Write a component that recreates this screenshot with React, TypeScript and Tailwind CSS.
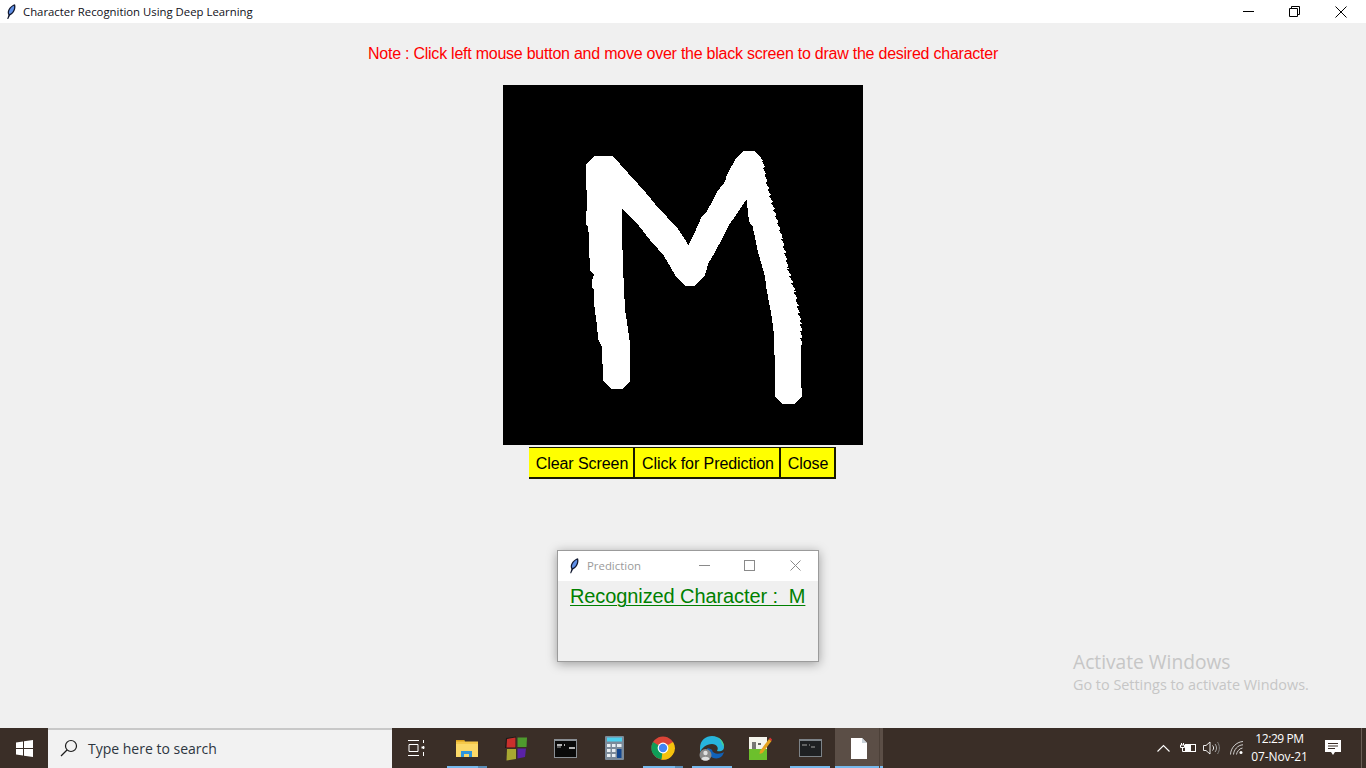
import React from "react";

const FONT = { fontFamily: '"Liberation Sans", Arial, sans-serif' };
const SEGOE = { fontFamily: '"Open Sans", "Noto Sans", sans-serif' };

function Feather({ size = 13 }: { size?: number }) {
  return (
    <svg width={size} height={size * 1.55} viewBox="0 0 10 15.5">
      <path d="M1.2 15 L2.4 11 C0.4 8 3 2 9 0.3 C10.5 4 8 10 4 11.4 L2 15.5 Z" fill="#10172e" />
      <path d="M3 9.6 C2.5 6.5 5 3 8 1.8 C8.6 4.5 7 8.6 3.8 10 Z" fill="#5f8fe6" />
    </svg>
  );
}

const toCanvas = (p: string): [number, number] => {
  const [x, y] = p.split(",").map(Number);
  return [x / 3 + 67, y / 3 + 55];
};

const HEAD =
  "48,75 75,47 128,47 175,100 225,155 262,200 320,262 345,298 355,315 375,275 395,230 410,215 445,150 465,125 470,105 495,60 520,33 555,33 578,60";
const RIGHT_EDGE = "578,60 590,125 600,165 617,225 637,295 655,385 675,455 693,550 695,620";
const TAIL =
  "695,770 672,792 638,792 615,770 613,590 605,530 590,450 585,410 575,375 565,340 548,260 537,245 530,180 525,185 495,230 480,250 460,290 430,345 415,370 405,405 375,437 345,437 315,405 295,370 280,345 240,300 205,255 157,208 157,310 160,400 165,510 173,560 180,610 180,725 158,747 125,747 100,722 95,620 85,600 80,550 72,490 72,450 67,445 67,420 72,405 60,390 55,260 48,255 52,150 48,150";

function serrated(): [number, number][] {
  const anchors = RIGHT_EDGE.split(" ").map(toCanvas);
  const out: [number, number][] = [];
  for (let i = 0; i < anchors.length - 1; i++) {
    const [x0, y0] = anchors[i];
    const [x1, y1] = anchors[i + 1];
    for (let y = y0; y < y1; y += 7) {
      const x = x0 + ((x1 - x0) * (y - y0)) / (y1 - y0);
      out.push([x + 1, y], [x - 1, y + 1]);
    }
  }
  return out;
}

const points = [
  ...HEAD.split(" ").map(toCanvas),
  ...serrated(),
  ...TAIL.split(" ").map(toCanvas),
]
  .map(([x, y]) => `${x.toFixed(1)},${y.toFixed(1)}`)
  .join(" ");

function Taskbar() {
  return (
    <div className="flex h-10 shrink-0 items-stretch bg-[#3a2e27] text-white">
      <div className="flex w-12 items-center justify-center">
        <svg width="17" height="17" viewBox="0 0 17 17" fill="#fff">
          <path d="M0 2.4 7 1.4V8H0ZM8 1.3 17 0V8H8ZM0 9H7V15.6L0 14.6ZM8 9H17V17L8 15.7Z" />
        </svg>
      </div>
      <div className="flex w-[344px] items-center border-t-2 border-[#c8c8c8] bg-[#f2f2f2] pb-[2px] pl-[12px] text-[#2d3640]">
        <svg width="18" height="18" viewBox="0 0 18 18" fill="none" stroke="#1c1c1c" strokeWidth="1.2">
          <circle cx="11" cy="7" r="5.5" />
          <path d="M7 11 1 17" />
        </svg>
        <span className="ml-[10px] text-[14px]" style={SEGOE}>Type here to search</span>
      </div>
      <div className="flex w-12 items-center justify-center">
        <svg width="17" height="16" viewBox="0 0 17 16" fill="none" stroke="#fff" strokeWidth="1">
          <path d="M0 .5H11M0 15.5H11M1 4.5H10V11.5H1ZM15.5 0V3M15.5 6V9M15.5 12V16" />
          <path d="M13.5 6.5h3v2h-3z" fill="#fff" stroke="none" />
        </svg>
      </div>
      <div className="relative ml-[3px] flex w-12 items-center justify-center">
        <svg width="24" height="20" viewBox="0 0 24 20">
          <path d="M1 2H9L10 3.5H23V19H1Z" fill="#f5c94a" />
          <path d="M1 2H9L10 3.5H1Z" fill="#dba21c" />
          <path d="M1 6H23V19H1Z" fill="#fbd968" />
          <path d="M6 19V13H17V19H14V16H9V19Z" fill="#2f96dc" />
        </svg>
        <div className="absolute bottom-0 left-[4px] h-0.5 w-[31px] bg-[#76b9ed]" />
        <div className="absolute bottom-0 left-[35px] h-0.5 w-[9px] bg-[#5a8eb8]" />
      </div>
      <div className="flex w-[50px] items-center justify-center">
        <svg width="23" height="25" viewBox="0 0 23 25">
          <path d="M1 2 11 0.5V12H0Z" fill="#1c1a18" />
          <path d="M2 3 10.5 1.5V11.5H1.5Z" fill="#c9302c" />
          <path d="M12.5 1.5 22 1.5 21.5 11H12.5Z" fill="#4e9a2e" />
          <path d="M2 13H11V23L1.5 24.5Z" fill="#a8a832" />
          <path d="M12.5 12.5H21L20 21 12.5 22.5Z" fill="#5a22a8" />
        </svg>
      </div>
      <div className="flex w-[48px] items-center justify-center">
        <svg width="23" height="19" viewBox="0 0 23 19">
          <rect width="23" height="19" fill="#8a8f94" />
          <rect x="1" y="2" width="21" height="16" fill="#0a0a0a" />
          <path d="M3 6H8M10 6H11M15 9H21" stroke="#eee" strokeWidth="1.4" />
          <path d="M3 8H7" stroke="#aaa" />
        </svg>
      </div>
      <div className="flex w-[50px] items-center justify-center">
        <svg width="19" height="24" viewBox="0 0 19 24">
          <rect width="19" height="24" fill="#7b8a99" rx="1" />
          <rect x="2" y="1.5" width="15" height="4" fill="#4dd0ee" />
          <path d="M2 8h3.5v3H2zM7 8h3.5v3H7zM2 13h3.5v3H2zM7 13h3.5v3H7zM2 18h3.5v3H2zM7 18h3.5v3H7z" fill="#e8eef2" />
          <rect x="12" y="8" width="4.5" height="3" fill="#e8eef2" />
          <rect x="12" y="13" width="4.5" height="9" fill="#12468f" />
        </svg>
      </div>
      <div className="relative flex w-[48px] items-center justify-center">
        <svg width="24" height="24" viewBox="0 0 24 24">
          <circle cx="12" cy="12" r="11.5" fill="#db4437" />
          <path d="M12 12 22 6A11.5 11.5 0 0 1 10 23.4Z" fill="#f4c20d" />
          <path d="M12 12 10.5 23.4A11.5 11.5 0 0 1 2 6Z" fill="#0f9d58" />
          <circle cx="12" cy="12" r="5.4" fill="#fff" />
          <circle cx="12" cy="12" r="4.2" fill="#4285f4" />
        </svg>
        <div className="absolute bottom-0 left-[4px] h-0.5 w-[32px] bg-[#76b9ed]" />
        <div className="absolute bottom-0 left-[36px] h-0.5 w-[8px] bg-[#5a8eb8]" />
      </div>
      <div className="relative flex w-[50px] items-center justify-center">
        <svg width="26" height="26" viewBox="0 0 26 26">
          <path d="M1 13C1 5 7 1 13 1 20 1 25 6 25 12 25 16 21 17 18 16 20 13 18 9 13 9 7 9 3 13 1 17Z" fill="#27b4dc" />
          <path d="M25 12C25 6 20 1 13 1 18 1 22 4 23 9Z" fill="#48d68e" />
          <path d="M8 14C8 20 14 25 20 23 23 22 24 20 25 17 22 19 14 20 13 15 12.8 14 8 12 8 14Z" fill="#1162b8" />
          <circle cx="6.5" cy="20" r="6" fill="#8c8c8c" />
          <circle cx="6.5" cy="18" r="2.2" fill="#e0e0e0" />
          <path d="M2.5 24C3 21 10 21 10.5 24 8.5 26 4.5 26 2.5 24Z" fill="#e0e0e0" />
        </svg>
        <div className="absolute bottom-0 left-[5px] h-0.5 w-[40px] bg-[#76b9ed]" />
      </div>
      <div className="flex w-[48px] items-center justify-center">
        <svg width="24" height="25" viewBox="0 0 24 25" className="-translate-x-px">
          <rect x="1" y="1" width="18" height="23" fill="#f4f4ec" />
          <rect x="1" y="13" width="18" height="11" fill="#6cc02c" />
          <path d="M5 6V13M7 6V13M10 8H13" stroke="#333" strokeWidth="1.3" />
          <path d="M12 15 21 3 23.5 5 14.5 17 11.5 18Z" fill="#e5a21d" />
          <path d="M21 3 22 1.5 24 3.5 23.5 5Z" fill="#d33" />
        </svg>
      </div>
      <div className="relative flex w-[50px] items-center justify-center">
        <svg width="23" height="18" viewBox="0 0 23 18">
          <rect width="23" height="18" fill="#7d8388" />
          <rect x="1" y="2" width="21" height="15" fill="#1e2022" />
          <path d="M3 6H8M10 6H11M12 8H16" stroke="#777" strokeWidth="1.3" />
        </svg>
        <div className="absolute bottom-0 left-[5px] h-0.5 w-[40px] bg-[#76b9ed]" />
      </div>
      <div className="relative flex w-[48px] items-center justify-center bg-[#5b4e46]">
        <svg width="16" height="21" viewBox="0 0 16 21">
          <path d="M0 0H11L16 5V21H0Z" fill="#fff" />
          <path d="M11 0 16 5H11Z" fill="#c9d2d9" />
        </svg>
        <div className="absolute bottom-0 left-0 h-0.5 w-full bg-[#76b9ed]" />
        <div className="absolute bottom-0 right-[3px] top-0 w-px bg-[#4c4038]" />
      </div>
      <div className="flex-1" />
      <div className="flex items-center">
        <svg width="13" height="8" viewBox="0 0 13 8" fill="none" stroke="#fff" strokeWidth="1.1" className="mr-[10px]">
          <path d="M.5 7.5 6.5 1.5 12.5 7.5" />
        </svg>
        <svg width="16" height="12" viewBox="0 0 16 12" fill="none" stroke="#fff" className="mr-[7px]">
          <path d="M3.5 1V3M1.5 1V3M0.5 3H4.5V5.5H0.5ZM2.5 6V9.5H5" strokeWidth="1" />
          <rect x="5.5" y="2.5" width="10" height="7" strokeWidth="1" />
          <rect x="6" y="3" width="5" height="6" fill="#fff" stroke="none" />
        </svg>
        <svg width="17" height="14" viewBox="0 0 17 14" fill="none" stroke="#fff" strokeWidth="0.9" className="mr-[10px]">
          <path d="M.5 4.5H3L7 1V13L3 9.5H.5Z" />
          <path d="M9.5 4.5C11 6 11 8 9.5 9.5" />
          <path d="M12 3C14 5.5 14 8.5 12 11" stroke="#bbb" />
          <path d="M14.5 1C17 5 17 9 14.5 13" stroke="#888" />
        </svg>
        <svg width="14" height="14" viewBox="0 0 14 14" fill="none" stroke="#e0e0e0" strokeWidth="0.9" className="mr-[2px]">
          <path d="M.5 13.5C.7 7 6 1 13 .5" />
          <path d="M3.5 13.5C3.8 9 7.5 4 13 3.8" />
          <path d="M6.5 13.5C6.8 11 9 7.5 12.5 7" />
          <circle cx="11" cy="11.5" r="1.5" fill="#fff" stroke="none" />
        </svg>
        <div className="w-[67px] text-center text-[12px] leading-[18px] text-white" style={SEGOE}>
          <div className="tracking-[-0.4px]">12:29 PM</div>
          <div className="tracking-[-0.1px]">07-Nov-21</div>
        </div>
        <div className="ml-[12px] mr-[20px] flex items-center">
          <svg width="16" height="16" viewBox="0 0 16 16">
            <path d="M0 0H16V12H10L8 15 6 12H0Z" fill="#fff" />
            <path d="M3 3.5H13M3 6H13M3 8.5H10" stroke="#3b2e27" />
          </svg>
        </div>
        <div className="h-full w-px self-stretch bg-[#6a5e56]" />
        <div className="w-[4px]" />
      </div>
    </div>
  );
}

export default function App() {
  return (
    <div className="relative flex h-[768px] w-[1366px] flex-col overflow-hidden bg-[#f0f0f0]" style={FONT}>
      <div className="flex h-[23px] shrink-0 items-center bg-white">
        <div className="ml-[6px] flex w-[17px] items-center">
          <Feather size={10} />
        </div>
        <span className="text-[11.35px] text-[#101020]" style={SEGOE}>Character Recognition Using Deep Learning</span>
        <div className="flex-1" />
        <svg width="11" height="11" viewBox="0 0 11 11" className="mr-[35px]" stroke="#000" fill="none">
          <path d="M0 5.5H11" />
        </svg>
        <svg width="11" height="11" viewBox="0 0 11 11" className="mr-[35px]" stroke="#000" fill="none">
          <path d="M.5 2.5H8.5V10.5H.5ZM2.5 2.5V.5H10.5V8.5H8.5" />
        </svg>
        <svg width="12" height="12" viewBox="0 0 12 12" className="mr-[19px]" stroke="#000" fill="none">
          <path d="M.5.5 11.5 11.5M11.5.5.5 11.5" />
        </svg>
      </div>

      <main className="flex flex-1 flex-col items-center">
        <p className="mt-[21px] text-[16px] leading-[20px] tracking-[-0.24px] text-[#ff0000]">
          Note : Click left mouse button and move over the black screen to draw the desired character
        </p>
        <div className="mt-[21px] h-[360px] w-[360px] bg-black">
          <svg width="360" height="360" viewBox="0 0 360 360" shapeRendering="crispEdges">
            <polygon points={points} fill="#fff" />
          </svg>
        </div>
        <div className="-ml-[2px] mt-[2px] flex h-[32px] items-stretch border-b-2 border-[#1a1a00] text-[16px] tracking-[-0.08px] text-black">
          <button className="w-[106px] border-r-2 border-t border-[#1a1a00] bg-[#ffff00] pl-[3px] pt-[2px]">Clear Screen</button>
          <button className="w-[146px] border-r-2 border-t border-[#1a1a00] bg-[#ffff00] pl-[3px] pt-[2px]">Click for Prediction</button>
          <button className="w-[55px] border-r-2 border-t border-[#1a1a00] bg-[#ffff00] pl-[2px] pt-[2px]">Close</button>
        </div>
      </main>

      <Taskbar />

      <div className="absolute left-[557px] top-[550px] flex h-[112px] w-[262px] flex-col border border-[#9b9b9b] bg-[#f0f0f0] shadow-[0_2px_10px_rgba(0,0,0,0.35)]">
        <div className="flex h-[30px] items-center bg-white">
          <div className="ml-[11px] w-[18px]">
            <Feather size={10} />
          </div>
          <span className="text-[11.4px] text-[#9a9a9a]" style={SEGOE}>Prediction</span>
          <div className="flex-1" />
          <svg width="11" height="11" viewBox="0 0 11 11" stroke="#8a8a8a" fill="none" className="mr-[34px] -translate-y-px">
            <path d="M0 5.5H11" />
          </svg>
          <svg width="11" height="11" viewBox="0 0 11 11" stroke="#8a8a8a" fill="none" className="mr-[35px] -translate-y-px">
            <rect x=".5" y=".5" width="10" height="10" />
          </svg>
          <svg width="11" height="11" viewBox="0 0 11 11" stroke="#8a8a8a" fill="none" className="mr-[17px] -translate-y-px">
            <path d="M.5.5 10.5 10.5M10.5.5.5 10.5" />
          </svg>
        </div>
        <div className="ml-[12px] mt-[3px] w-fit whitespace-pre text-[20px] leading-[24px] tracking-[-0.1px] text-[#008000] underline decoration-[1px] underline-offset-2">
          Recognized Character :  M
        </div>
      </div>

      <div className="absolute left-[1073px] top-[649px] text-[#c6c6c6]" style={SEGOE}>
        <div className="text-[19.2px] leading-[26px]">Activate Windows</div>
        <div className="text-[14.4px] leading-[20px]">Go to Settings to activate Windows.</div>
      </div>
    </div>
  );
}
